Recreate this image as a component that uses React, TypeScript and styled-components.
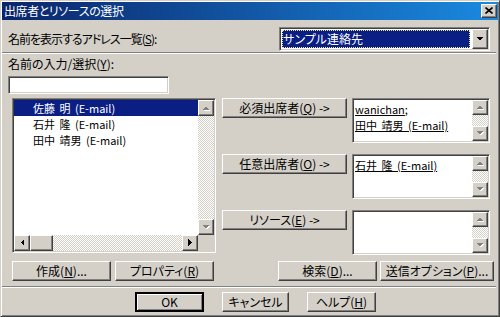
import React from "react";
import styled, { createGlobalStyle, css } from "styled-components";

const FACE = "#D4D0C8";
const NAVY = "#0A1E84";
const FONT = `"Noto Sans CJK JP", "Noto Sans", sans-serif`;

const Global = createGlobalStyle`
  html, body { margin: 0; padding: 0; background: ${FACE}; }
  body { font-family: ${FONT}; font-size: 12px; color: #000; font-feature-settings: "palt"; }
  * { box-sizing: border-box; }
`;

const sunken = css`
  border: 1px solid;
  border-color: #808080 #ffffff #ffffff #808080;
  box-shadow: inset 1px 1px #404040, inset -1px -1px ${FACE};
`;

const raised = css`
  border: 1px solid;
  border-color: #ffffff #404040 #404040 #ffffff;
  box-shadow: inset -1px -1px #808080;
  background: ${FACE};
`;

const dither = css`
  background-color: ${FACE};
  background-image: repeating-conic-gradient(#ffffff 0% 25%, transparent 0% 50%);
  background-size: 2px 2px;
`;

const Window = styled.div`
  width: 500px;
  height: 317px;
  padding: 1px;
  background: ${FACE};
  border: 1px solid;
  border-color: ${FACE} #404040 #404040 ${FACE};
  box-shadow: inset 1px 1px #ffffff, inset -1px -1px #808080;
  display: flex;
  flex-direction: column;
`;

const TitleBar = styled.div`
  height: 18px;
  padding: 0 1px 0 2px;
  display: flex;
  align-items: center;
  justify-content: space-between;
  background: linear-gradient(to right, #0a246a, #1a8ae0);
`;

const Title = styled.span`
  color: #ffffff;
  font-size: 12px;
  line-height: 18px;
  letter-spacing: -0.4px;
`;

const CloseButton = styled.div`
  ${raised};
  width: 16px;
  height: 14px;
  display: flex;
  align-items: center;
  justify-content: center;
  padding-bottom: 1px;
`;

const TopRow = styled.div`
  margin-top: 7px;
  height: 24px;
  padding: 0 8px 0 6px;
  display: flex;
  align-items: center;
  justify-content: space-between;
`;

const Label = styled.span<{ $indent?: number; $top?: number; $tight?: boolean }>`
  display: block;
  line-height: 14px;
  margin-left: ${(p) => p.$indent ?? 0}px;
  margin-top: ${(p) => p.$top ?? 0}px;
  white-space: nowrap;
  letter-spacing: ${(p) => (p.$tight ? "-1px" : "0")};
`;

const Key = styled.span`
  text-decoration: underline;
`;

const Combo = styled.div`
  ${sunken};
  width: 211px;
  height: 24px;
  padding: 1px;
  display: flex;
  background: #ffffff;
`;

const ComboValue = styled.div`
  flex: 1;
  margin: 1px 2px 1px 1px;
  padding-left: 1px;
  background: ${NAVY};
  color: #ffffff;
  line-height: 18px;
  outline: 1px dotted #e8e890;
  outline-offset: -1px;
`;

const DropButton = styled.div`
  ${raised};
  width: 16px;
  display: flex;
  align-items: center;
  justify-content: center;
`;

const Separator = styled.div<{ $top: number }>`
  margin: ${(p) => p.$top}px 2px 0 0;
  height: 2px;
  border-top: 1px solid #808080;
  border-bottom: 1px solid #ffffff;
`;

const TextBox = styled.div`
  ${sunken};
  margin: 5px 0 0 6px;
  width: 161px;
  height: 18px;
  background: #ffffff;
`;

const MainRow = styled.div`
  margin-top: 4px;
  padding-left: 10px;
  display: flex;
  align-items: flex-start;
`;

const ListBox = styled.div`
  ${sunken};
  width: 204px;
  height: 155px;
  padding: 1px;
  background: #ffffff;
  display: grid;
  grid-template-columns: 1fr 16px;
  grid-template-rows: 1fr 16px;
`;

const Items = styled.div`
  overflow: hidden;
`;

const Item = styled.div<{ $selected?: boolean }>`
  height: 16px;
  line-height: 16px;
  font-size: 11px;
  word-spacing: 2px;
  padding-left: 19px;
  white-space: nowrap;
  background: ${(p) => (p.$selected ? NAVY : "transparent")};
  color: ${(p) => (p.$selected ? "#ffffff" : "#000000")};
`;

const VScroll = styled.div`
  display: flex;
  flex-direction: column;
  ${dither};
`;

const HScroll = styled.div`
  display: flex;
  ${dither};
`;

const Track = styled.div`
  flex: 1;
`;

const Corner = styled.div`
  background: ${FACE};
`;

const ScrollButton = styled.div<{ $w: number; $h: number }>`
  ${raised};
  width: ${(p) => p.$w}px;
  height: ${(p) => p.$h}px;
  flex: none;
  display: flex;
  align-items: center;
  justify-content: center;
`;

const RecipientColumn = styled.div`
  margin-left: 6px;
  display: flex;
  flex-direction: column;
  gap: 11px;
`;

const RecipientRow = styled.div`
  display: flex;
  align-items: flex-start;
  gap: 5px;
`;

const Button = styled.div<{ $w: number; $default?: boolean }>`
  ${raised};
  width: ${(p) => p.$w}px;
  height: 20px;
  flex: none;
  display: flex;
  align-items: center;
  justify-content: center;
  white-space: nowrap;
  line-height: 14px;
  ${(p) =>
    p.$default &&
    css`
      border: 2px solid #000000;
      box-shadow: inset 1px 1px #ffffff, inset -1px -1px #808080;
    `}
`;

const Field = styled.div`
  ${sunken};
  width: 138px;
  height: 45px;
  padding: 1px;
  background: #ffffff;
  display: grid;
  grid-template-columns: 1fr 16px;
`;

const FieldText = styled.div`
  padding: 1px 0 0 1px;
  font-size: 11px;
  line-height: 16px;
  word-spacing: 2px;
  white-space: nowrap;
  overflow: hidden;
`;

const Resolved = styled.span`
  text-decoration: underline;
`;

const ActionRow = styled.div`
  margin-top: 6px;
  padding: 0 4px 0 10px;
  display: flex;
  justify-content: space-between;
`;

const ButtonGroup = styled.div<{ $gap: number }>`
  display: flex;
  gap: ${(p) => p.$gap}px;
`;

const FooterRow = styled.div`
  margin-top: 4px;
  padding-left: 133px;
  display: flex;
  gap: 18px;
`;

type Dir = "up" | "down" | "left" | "right";

const TRI: Record<Dir, string> = {
  up: "0,4 7,4 3.5,0.5",
  down: "0,0 7,0 3.5,3.5",
  left: "4,0 4,7 0.5,3.5",
  right: "0,0 0,7 3.5,3.5",
};

const Arrow = ({ dir, disabled }: { dir: Dir; disabled?: boolean }) => {
  const vertical = dir === "up" || dir === "down";
  const w = vertical ? 8 : 5;
  const h = vertical ? 5 : 8;
  return (
    <svg width={w} height={h} viewBox={`0 0 ${w} ${h}`} shapeRendering="crispEdges">
      {disabled && (
        <polygon points={TRI[dir]} fill="#ffffff" transform="translate(1 1)" />
      )}
      <polygon points={TRI[dir]} fill={disabled ? "#808080" : "#000000"} />
    </svg>
  );
};

const CloseGlyph = () => (
  <svg width="8" height="7" viewBox="0 0 8 7">
    <path d="M0.5 0.5 L7.5 6.5 M7.5 0.5 L0.5 6.5" stroke="#000" strokeWidth="1.6" fill="none" />
  </svg>
);

const VBar = ({ btn }: { btn: number }) => (
  <VScroll>
    <ScrollButton $w={16} $h={btn}>
      <Arrow dir="up" disabled />
    </ScrollButton>
    <Track />
    <ScrollButton $w={16} $h={btn}>
      <Arrow dir="down" disabled />
    </ScrollButton>
  </VScroll>
);

const recipients = [
  {
    label: (
      <>
        必須出席者(<Key>Q</Key>) {"->"}
      </>
    ),
    lines: [
      <>
        <Resolved>wanichan</Resolved>;
      </>,
      <Resolved>田中 靖男 (E-mail)</Resolved>,
    ],
  },
  {
    label: (
      <>
        任意出席者(<Key>O</Key>) {"->"}
      </>
    ),
    lines: [<Resolved>石井 隆 (E-mail)</Resolved>],
  },
  {
    label: (
      <>
        リソース(<Key>E</Key>) {"->"}
      </>
    ),
    lines: [],
  },
];

const names = ["佐藤 明 (E-mail)", "石井 隆 (E-mail)", "田中 靖男 (E-mail)"];

export default function App() {
  return (
    <>
      <Global />
      <Window>
        <TitleBar>
          <Title>出席者とリソースの選択</Title>
          <CloseButton>
            <CloseGlyph />
          </CloseButton>
        </TitleBar>

        <TopRow>
          <Label $tight>
            名前を表示するアドレス一覧(<Key>S</Key>):
          </Label>
          <Combo>
            <ComboValue>サンプル連絡先</ComboValue>
            <DropButton>
              <Arrow dir="down" />
            </DropButton>
          </Combo>
        </TopRow>

        <Separator $top={1} />

        <Label $indent={6} $top={3}>
          名前の入力/選択(<Key>Y</Key>):
        </Label>
        <TextBox />

        <MainRow>
          <ListBox>
            <Items>
              {names.map((n, i) => (
                <Item key={n} $selected={i === 0}>
                  {n}
                </Item>
              ))}
            </Items>
            <VBar btn={16} />
            <HScroll>
              <ScrollButton $w={16} $h={16}>
                <Arrow dir="left" />
              </ScrollButton>
              <ScrollButton $w={23} $h={16} />
              <Track />
              <ScrollButton $w={16} $h={16}>
                <Arrow dir="right" />
              </ScrollButton>
            </HScroll>
            <Corner />
          </ListBox>

          <RecipientColumn>
            {recipients.map((r, i) => (
              <RecipientRow key={i}>
                <Button $w={125}>{r.label}</Button>
                <Field>
                  <FieldText>
                    {r.lines.map((l, j) => (
                      <div key={j}>{l}</div>
                    ))}
                  </FieldText>
                  <VBar btn={15} />
                </Field>
              </RecipientRow>
            ))}
          </RecipientColumn>
        </MainRow>

        <ActionRow>
          <ButtonGroup $gap={4}>
            <Button $w={99}>
              作成(<Key>N</Key>)...
            </Button>
            <Button $w={99}>
              プロパティ(<Key>R</Key>)
            </Button>
          </ButtonGroup>
          <ButtonGroup $gap={3}>
            <Button $w={99}>
              検索(<Key>D</Key>)...
            </Button>
            <Button $w={114}>
              送信オプション(<Key>P</Key>)...
            </Button>
          </ButtonGroup>
        </ActionRow>

        <Separator $top={5} />

        <FooterRow>
          <Button $w={69} $default>
            OK
          </Button>
          <Button $w={67}>キャンセル</Button>
          <Button $w={69}>
            ヘルプ(<Key>H</Key>)
          </Button>
        </FooterRow>
      </Window>
    </>
  );
}
